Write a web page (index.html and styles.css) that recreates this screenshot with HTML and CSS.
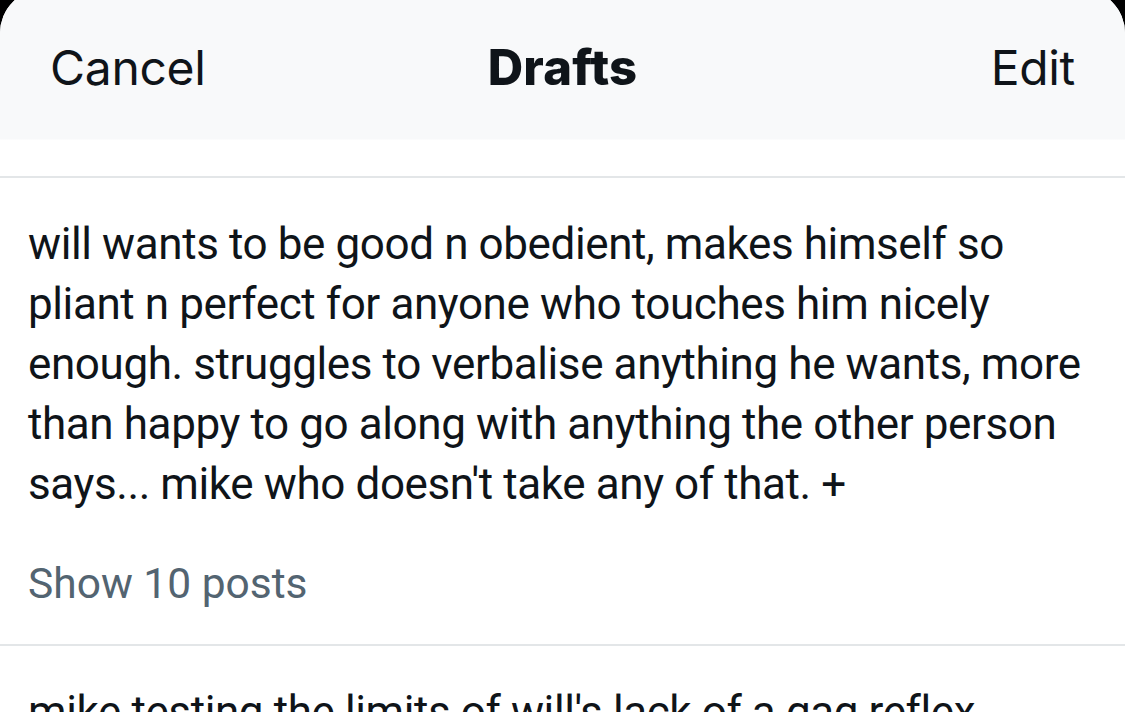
FILE: index.html
```html
<!DOCTYPE html>
<html>
<head>
<meta charset="utf-8">
<link rel="stylesheet" href="styles.css">
</head>
<body>
<div class="sheet">
  <header class="header">
    <span class="btn left">Cancel</span>
    <span class="title">Drafts</span>
    <span class="btn right">Edit</span>
  </header>
  <section class="draft">
    <p class="text"><span class="ln">will wants to be good n obedient, makes himself so</span> <span class="ln">pliant n perfect for anyone who touches him nicely</span> <span class="ln">enough. struggles to verbalise anything he wants, more</span> <span class="ln">than happy to go along with anything the other person</span> <span class="ln">says... mike who doesn't take any of that. +</span></p>
    <div class="more">Show 10 posts</div>
  </section>
  <section class="draft">
    <p class="text"><span class="ln">mike testing the limits of will's lack of a gag reflex</span></p>
  </section>
</div>
</body>
</html>
```
FILE: styles.css
```css
html, body { margin: 0; padding: 0; }
body {
  background: #000;
  width: 1125px;
  height: 712px;
  overflow: hidden;
  font-family: "Roboto", "Liberation Sans", sans-serif;
  color: #0f1419;
}
.sheet {
  margin-top: -11px;
  background: #fff;
  border-radius: 44px 44px 0 0;
  height: 740px;
  overflow: hidden;
}
.header {
  height: 189px;
  box-sizing: border-box;
  padding: 49px 50px 0 50px;
  display: grid;
  grid-template-columns: 1fr auto 1fr;
  align-items: start;
  background: linear-gradient(#f8f9fa 0, #f8f9fa 150px, #fff 151px);
  border-bottom: 2px solid #e3e6e8;
  font-family: "Inter", "Liberation Sans", sans-serif;
}
.btn { font-size: 48px; line-height: 60px; font-weight: 400; letter-spacing: -0.3px; }
.left { justify-self: start; }
.right { justify-self: end; }
.title { font-size: 49px; line-height: 60px; font-weight: 800; letter-spacing: 0.2px; }
.draft {
  border-bottom: 2px solid #e3e6e8;
  padding: 0 28px;
}
.text {
  margin: 0;
  padding-top: 36px;
  font-size: 44px;
  line-height: 60px;
  letter-spacing: -0.4px;
}
.ln { display: block; white-space: nowrap; }
.more {
  margin-top: 40px;
  font-size: 42.5px;
  line-height: 60px;
  color: #536471;
  padding-bottom: 30px;
}
```
